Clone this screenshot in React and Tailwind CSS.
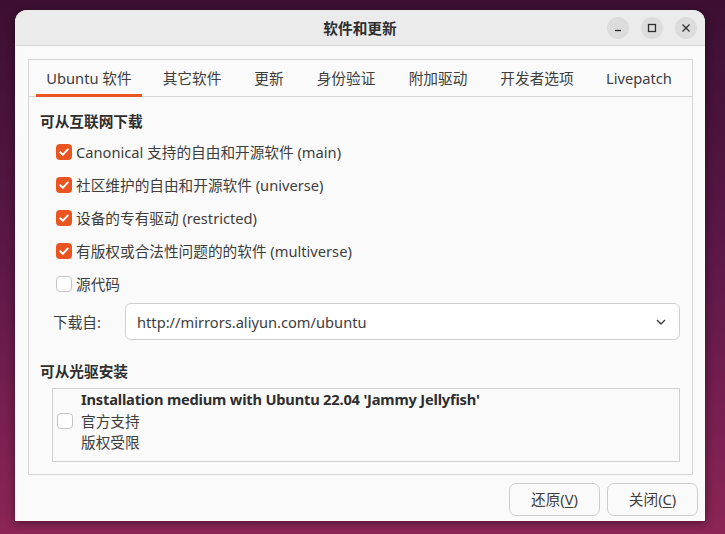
import React from 'react';

const tabs = [
  { label: 'Ubuntu 软件', w: 'w-[106px]', active: true },
  { label: '其它软件', w: 'w-[100px]' },
  { label: '更新', w: 'w-[54px]' },
  { label: '身份验证', w: 'w-[100px]' },
  { label: '附加驱动', w: 'w-[84px]' },
  { label: '开发者选项', w: 'w-[114px]' },
  { label: 'Livepatch', w: 'w-[90px]' },
];

const sources = [
  { label: 'Canonical 支持的自由和开源软件 (main)', checked: true },
  { label: '社区维护的自由和开源软件 (universe)', checked: true },
  { label: '设备的专有驱动 (restricted)', checked: true },
  { label: '有版权或合法性问题的的软件 (multiverse)', checked: true },
  { label: '源代码', checked: false },
];

function Checkbox({ checked }) {
  if (checked) {
    return (
      <span className="w-[16px] h-[16px] rounded-[4px] bg-[#e95420] flex items-center justify-center shrink-0">
        <svg width="12" height="12" viewBox="0 0 12 12" fill="none">
          <path d="M2.2 6.3 L4.8 8.8 L9.8 3.4" stroke="#fff" strokeWidth="1.9" strokeLinecap="round" strokeLinejoin="round" />
        </svg>
      </span>
    );
  }
  return <span className="w-[16px] h-[16px] rounded-[4px] bg-white border border-[#c4c4c4] shrink-0" />;
}

function WinButton({ children }) {
  return (
    <span className="w-[22px] h-[22px] rounded-full bg-[#dcdcdc] flex items-center justify-center">
      {children}
    </span>
  );
}

function DialogButton({ label, mnemonic }) {
  return (
    <button className="w-[91px] h-[33px] rounded-[7px] border border-[#cdcdcd] bg-[#fafafa] text-[#3d3d3d] text-[14.67px]">
      {label}(<span className="underline underline-offset-2">{mnemonic}</span>)
    </button>
  );
}

export default function App() {
  return (
    <div className="w-[725px] h-[534px] overflow-hidden bg-linear-to-b from-[#3c0f32] via-[#5e1848] to-[#8c2556] pt-[10px] pl-[15px] font-['Noto_Sans','Noto_Sans_CJK_SC',sans-serif] text-[14.67px] text-[#3d3d3d]">
      <div className="w-[690px] h-[511px] bg-[#fafafa] rounded-t-[12px] shadow-[0_2px_10px_rgba(0,0,0,0.45)] flex flex-col">
        {/* Title bar */}
        <div className="h-[36px] bg-[#ebebeb] rounded-t-[12px] border-b border-[#d4d4d4] flex items-center relative shrink-0">
          <div className="flex-1 text-center font-bold text-[#2e2e2e]">软件和更新</div>
          <div className="absolute right-[8px] top-[7px] flex gap-[12px]">
            <WinButton>
              <svg width="10" height="10" viewBox="0 0 10 10"><path d="M2 7.5 H8" stroke="#2e2e2e" strokeWidth="1.3" /></svg>
            </WinButton>
            <WinButton>
              <svg width="10" height="10" viewBox="0 0 10 10"><rect x="1.5" y="1.5" width="7" height="7" fill="none" stroke="#2e2e2e" strokeWidth="1.3" /></svg>
            </WinButton>
            <WinButton>
              <svg width="10" height="10" viewBox="0 0 10 10"><path d="M1.5 1.5 L8.5 8.5 M8.5 1.5 L1.5 8.5" stroke="#2e2e2e" strokeWidth="1.3" /></svg>
            </WinButton>
          </div>
        </div>

        {/* Notebook */}
        <div className="pt-[13px] pl-[13px] pr-[12px]">
          <div className="border border-[#d6d6d6] bg-[#fafafa]">
            <div className="h-[37px] border-b border-[#d6d6d6] flex pl-[7px]">
              {tabs.map((t) => (
                <div
                  key={t.label}
                  className={`${t.w} h-[37px] -mb-px pt-[2px] flex items-center justify-center whitespace-nowrap border-b-[3px] ${t.active ? 'border-[#e95420]' : 'border-transparent'}`}
                >
                  {t.label}
                </div>
              ))}
            </div>

            <div className="pl-[11px] pr-[12px] pt-[14px] pb-[12px]">
              <div className="font-bold leading-[20px] text-[#2e2e2e]">可从互联网下载</div>
              <div className="mt-[4px] pl-[16px]">
                {sources.map((s) => (
                  <div key={s.label} className="h-[33px] flex items-center gap-[4px]">
                    <Checkbox checked={s.checked} />
                    <span className="whitespace-nowrap">{s.label}</span>
                  </div>
                ))}
              </div>

              <div className="mt-[3px] pl-[13px] flex items-center">
                <span className="w-[72px] whitespace-nowrap">下载自:</span>
                <div className="flex-1 h-[37px] rounded-[6px] border border-[#cfcfcf] bg-white flex items-center pl-[11px] pr-[13px]">
                  <span className="flex-1">http://mirrors.aliyun.com/ubuntu</span>
                  <svg width="10" height="6" viewBox="0 0 10 6" fill="none">
                    <path d="M1 1 L5 5 L9 1" stroke="#3d3d3d" strokeWidth="1.4" />
                  </svg>
                </div>
              </div>

              <div className="mt-[21px] font-bold leading-[20px] text-[#2e2e2e]">可从光驱安装</div>
              <div className="mt-[7px] ml-[12px] border border-[#d0d0d0] bg-[#fafafa] flex items-center pl-[4px] pb-[7px]">
                <Checkbox checked={false} />
                <div className="ml-[8px] leading-[21.5px]">
                  <div className="font-bold text-[#2e2e2e] tracking-[-0.2px]">Installation medium with Ubuntu 22.04 'Jammy Jellyfish'</div>
                  <div>官方支持</div>
                  <div>版权受限</div>
                </div>
              </div>
            </div>
          </div>
        </div>

        {/* Buttons */}
        <div className="mt-[8px] pr-[7px] flex justify-end gap-[7px]">
          <DialogButton label="还原" mnemonic="V" />
          <DialogButton label="关闭" mnemonic="C" />
        </div>
      </div>
    </div>
  );
}
